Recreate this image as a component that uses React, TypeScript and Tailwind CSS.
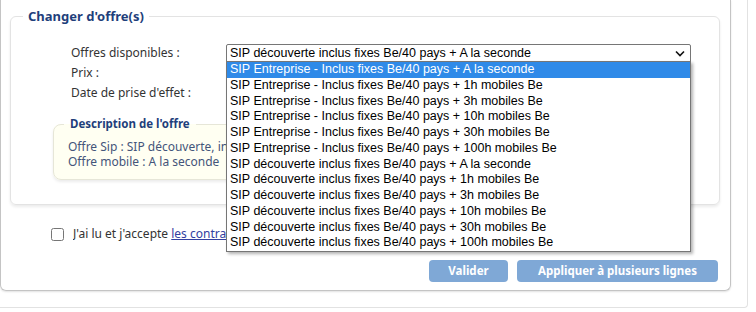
import React from "react";

const options = [
  "SIP Entreprise - Inclus fixes Be/40 pays + A la seconde",
  "SIP Entreprise - Inclus fixes Be/40 pays + 1h mobiles Be",
  "SIP Entreprise - Inclus fixes Be/40 pays + 3h mobiles Be",
  "SIP Entreprise - Inclus fixes Be/40 pays + 10h mobiles Be",
  "SIP Entreprise - Inclus fixes Be/40 pays + 30h mobiles Be",
  "SIP Entreprise - Inclus fixes Be/40 pays + 100h mobiles Be",
  "SIP découverte inclus fixes Be/40 pays + A la seconde",
  "SIP découverte inclus fixes Be/40 pays + 1h mobiles Be",
  "SIP découverte inclus fixes Be/40 pays + 3h mobiles Be",
  "SIP découverte inclus fixes Be/40 pays + 10h mobiles Be",
  "SIP découverte inclus fixes Be/40 pays + 30h mobiles Be",
  "SIP découverte inclus fixes Be/40 pays + 100h mobiles Be",
];

export default function App() {
  return (
    <div className="relative w-[756px] h-[312px] overflow-hidden bg-white font-['Noto_Sans',sans-serif] text-[12px] text-[#333]">
      <div className="w-[748px] h-[308px] border-r border-b border-[#e2e2e2] rounded-br-[4px]">
        <div className="w-[731px] h-[291px] border-l border-r border-b border-[#c4c4c4] rounded-b-[6px] shadow-[0_1px_2px_rgba(0,0,0,0.12)] flex flex-col">
          <fieldset className="ml-[9px] mt-[8px] w-[710px] h-[197px] border border-[#e3e3e3] rounded-[6px] shadow-[0_2px_3px_rgba(0,0,0,0.08)]">
            <legend className="ml-[12px] px-[5px] h-[16px] leading-[16px] font-bold text-[13px] text-[#1f3f7b]">
              Changer d'offre(s)
            </legend>
            <div className="grid grid-cols-[155px_1fr] auto-rows-[20px] mt-[19px] ml-[60px] items-center">
              <div>Offres disponibles :</div>
              <div className="h-[19px] w-[465px] border border-[#767676] rounded-[2px] flex items-center justify-between pl-[3px] pr-[5px] text-black">
                <span className="font-['Liberation_Sans',Arial,sans-serif] text-[12.5px] leading-[16px]">
                  SIP découverte inclus fixes Be/40 pays + A la seconde
                </span>
                <svg width="10" height="7" viewBox="0 0 10 7">
                  <path d="M1 1.5 L5 5.5 L9 1.5" fill="none" stroke="#111" strokeWidth="1.6" />
                </svg>
              </div>
              <div>Prix :</div>
              <div></div>
              <div>Date de prise d'effet :</div>
              <div></div>
            </div>
            <fieldset className="ml-[42px] mt-[13px] w-[550px] h-[64px] border border-[#e6e6d8] rounded-[8px] bg-[#fffff2] shadow-[0_2px_3px_rgba(0,0,0,0.08)]">
              <legend className="ml-[10px] px-[6px] h-[16px] leading-[16px] font-bold text-[11.5px] text-[#1f3f7b]">
                Description de l'offre
              </legend>
              <div className="mt-[7px] ml-[14px] w-[158px] overflow-hidden whitespace-nowrap leading-[15px] text-[#44557a]">
                <div>Offre Sip : SIP découverte, inclus fixes Be/40 pays</div>
                <div>Offre mobile : A la seconde</div>
              </div>
            </fieldset>
          </fieldset>
          <div className="flex items-center mt-[21px] ml-[50px] h-[16px]">
            <input type="checkbox" className="w-[13px] h-[13px] m-0" />
            <span className="ml-[9px] w-[153px] overflow-hidden whitespace-nowrap">
              J'ai lu et j'accepte{" "}
              <span className="underline text-[#3340a0]">les contrats</span>
            </span>
          </div>
          <div className="flex justify-end gap-[9px] mt-[18px] mr-[12px]">
            <div className="w-[79px] h-[22px] rounded-[4px] bg-[#7fa8d6] text-white font-bold text-[11.5px] flex items-center justify-center">
              Valider
            </div>
            <div className="w-[201px] h-[22px] rounded-[4px] bg-[#7fa8d6] text-white font-bold text-[11.5px] flex items-center justify-center">
              Appliquer à plusieurs lignes
            </div>
          </div>
        </div>
      </div>
      <div className="absolute left-[226px] top-[61px] w-[465px] border border-[#767676] bg-white shadow-[2px_2px_3px_rgba(0,0,0,0.3)] text-black">
        {options.map((o, i) => (
          <div
            key={i}
            className={
              i === 0
                ? "h-[15.75px] pl-[3px] bg-[#2f8ae8] text-white font-['Liberation_Sans',Arial,sans-serif] text-[12.5px] leading-[15.75px]"
                : "h-[15.75px] pl-[3px] font-['Liberation_Sans',Arial,sans-serif] text-[12.5px] leading-[15.75px]"
            }
          >
            {o}
          </div>
        ))}
      </div>
    </div>
  );
}
